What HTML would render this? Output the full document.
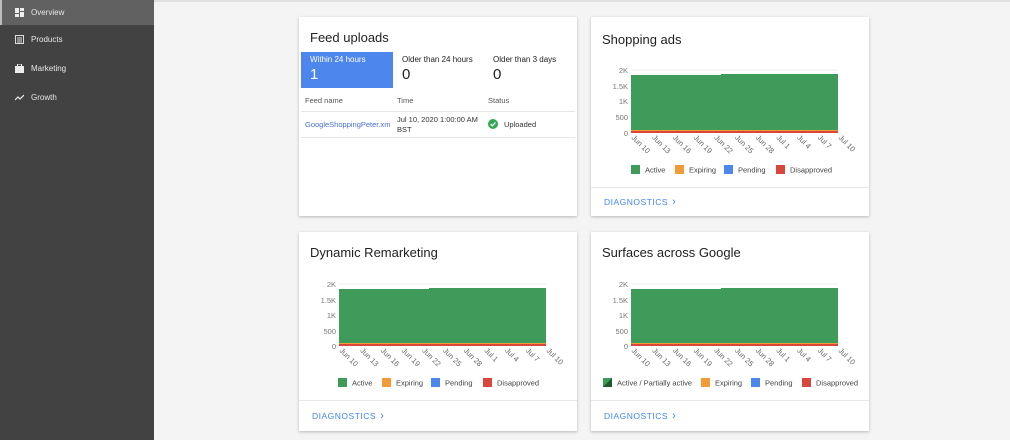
<!DOCTYPE html>
<html><head><style>
*{box-sizing:border-box;margin:0;padding:0}
body{width:1010px;height:440px;overflow:hidden;background:#f4f4f4;font-family:"Liberation Sans",sans-serif;position:relative}
.side{position:absolute;left:0;top:0;width:154px;height:440px;background:#424242}
.item{position:absolute;left:0;width:154px;height:25px;color:#e6e6e6;font-size:8px;line-height:25px;padding-left:31px}
.item.sel{background:#616161;border-left:2px solid #bdbdbd;padding-left:29px}
.ic{position:absolute;left:15px;top:8px;width:9px;height:9px}
.topline{position:absolute;left:154px;top:0;right:0;height:2px;background:#e0e0e0}
.card{position:absolute;background:#fff;width:278px;height:199px;box-shadow:0 1px 3px rgba(0,0,0,.25)}
.title{position:absolute;left:11px;top:14px;font-size:13px;color:#212121}
.div{position:absolute;left:0;right:0;height:1px;background:#e6e6e6}
.diag{position:absolute;left:13px;top:179px;font-size:8.5px;color:#4285f4;letter-spacing:.5px}
.diag b{font-weight:normal;font-size:11px;margin-left:4px}
svg text{font-family:"Liberation Sans",sans-serif}
</style></head><body>
<div class="side">
 <div class="item sel" style="top:0"><svg class="ic" style="left:13px" viewBox="0 0 9 9"><rect x="0" y="0" width="4" height="5" fill="#eee"/><rect x="5" y="0" width="4" height="3" fill="#eee"/><rect x="0" y="6" width="4" height="3" fill="#eee"/><rect x="5" y="4" width="4" height="5" fill="#eee"/></svg>Overview</div>
 <div class="item" style="top:27px"><svg class="ic" viewBox="0 0 9 9"><rect x=".5" y=".5" width="8" height="8" fill="none" stroke="#ddd"/><path d="M2 3h5M2 5h5M2 7h5" stroke="#ddd"/></svg>Products</div>
 <div class="item" style="top:56px"><svg class="ic" viewBox="0 0 9 9"><rect x="0" y="2" width="9" height="7" fill="#eee"/><rect x="2.5" y="0" width="4" height="3" fill="none" stroke="#eee"/></svg>Marketing</div>
 <div class="item" style="top:85px"><svg class="ic" viewBox="0 0 9 9"><path d="M0 7l3-3 2 2 4-4" stroke="#eee" fill="none" stroke-width="1.2"/></svg>Growth</div>
</div>
<div class="topline"></div>

<div class="card" style="left:299px;top:17px">
 <div class="title" style="top:13px">Feed uploads</div>
 <div style="position:absolute;left:2px;top:35px;width:92px;height:36px;background:#4d87ee;color:#fff;padding:3px 9px"><div style="font-size:8px">Within 24 hours</div><div style="font-size:15px;margin-top:2px">1</div></div>
 <div style="position:absolute;left:103px;top:38px;color:#212121"><div style="font-size:8px">Older than 24 hours</div><div style="font-size:15px;margin-top:2px">0</div></div>
 <div style="position:absolute;left:194px;top:38px;color:#212121"><div style="font-size:8px">Older than 3 days</div><div style="font-size:15px;margin-top:2px">0</div></div>
 <div style="position:absolute;top:79px;left:6px;font-size:7.5px;color:#555">Feed name</div>
 <div style="position:absolute;top:79px;left:98px;font-size:7.5px;color:#555">Time</div>
 <div style="position:absolute;top:79px;left:189px;font-size:7.5px;color:#555">Status</div>
 <div class="div" style="top:94px;left:2px;right:2px"></div>
 <div style="position:absolute;top:103px;left:6px;font-size:7.5px;color:#4a6fd6">GoogleShoppingPeter.xm</div>
 <div style="position:absolute;top:98px;left:98px;font-size:7.5px;color:#333;line-height:10px">Jul 10, 2020 1:00:00 AM<br>BST</div>
 <svg style="position:absolute;left:189px;top:102px" width="10" height="10" viewBox="0 0 10 10"><circle cx="5" cy="5" r="5" fill="#34a853"/><path d="M2.6 5.2l1.7 1.6 3.2-3.3" stroke="#fff" stroke-width="1.3" fill="none"/></svg>
 <div style="position:absolute;top:103px;left:205px;font-size:7.5px;color:#333">Uploaded</div>
 <div class="div" style="top:120px;left:2px;right:2px"></div>
</div>

<div class="card" style="left:591px;top:17px">
 <div class="title" style="top:15px">Shopping ads</div>
 <svg style="position:absolute;left:0;top:0" width="278" height="170">
  <g fill="#777" font-size="7.5" text-anchor="end"><text x="37" y="56">2K</text><text x="37" y="72">1.5K</text><text x="37" y="87">1K</text><text x="37" y="103">500</text><text x="37" y="119">0</text></g>
  <path d="M40 53H247M40 69H247M40 84H247M40 100H247" stroke="#e6e6e6" stroke-width=".7"/>
  <path d="M40 58L130 58L130 57L247 57L247 114L40 114Z" fill="#3f9b5a"/>
  <rect x="40" y="113" width="207" height="1" fill="#f29b38"/><rect x="40" y="114" width="207" height="2" fill="#d9473c"/>
  <g fill="#666" font-size="7.5"><text transform="translate(40,121) rotate(45)">Jun 10</text><text transform="translate(60.7,121) rotate(45)">Jun 13</text><text transform="translate(81.4,121) rotate(45)">Jun 16</text><text transform="translate(102.1,121) rotate(45)">Jun 19</text><text transform="translate(122.8,121) rotate(45)">Jun 22</text><text transform="translate(143.5,121) rotate(45)">Jun 25</text><text transform="translate(164.2,121) rotate(45)">Jun 28</text><text transform="translate(184.9,121) rotate(45)">Jul 1</text><text transform="translate(205.6,121) rotate(45)">Jul 4</text><text transform="translate(226.3,121) rotate(45)">Jul 7</text><text transform="translate(247,121) rotate(45)">Jul 10</text></g>
  <g font-size="7.5" fill="#444"><rect x="40" y="148" width="9" height="9" fill="#3f9b5a"/><text x="54" y="155.5">Active</text><rect x="84" y="148" width="9" height="9" fill="#f29b38"/><text x="98" y="155.5">Expiring</text><rect x="133" y="148" width="9" height="9" fill="#4d87ee"/><text x="147" y="155.5">Pending</text><rect x="185" y="148" width="9" height="9" fill="#d9473c"/><text x="199" y="155.5">Disapproved</text></g>
 </svg>
 <div class="div" style="top:170px"></div>
 <div class="diag">DIAGNOSTICS<b>›</b></div>
</div>

<div class="card" style="left:299px;top:232px">
 <div class="title" style="top:13px">Dynamic Remarketing</div>
 <svg style="position:absolute;left:0;top:0" width="278" height="170">
  <g fill="#777" font-size="7.5" text-anchor="end"><text x="37" y="55">2K</text><text x="37" y="71">1.5K</text><text x="37" y="86">1K</text><text x="37" y="102">500</text><text x="37" y="117">0</text></g>
  <path d="M40 52H247M40 68H247M40 83H247M40 99H247" stroke="#e6e6e6" stroke-width=".7"/>
  <path d="M40 57L130 57L130 56L247 56L247 112L40 112Z" fill="#3f9b5a"/>
  <rect x="40" y="111" width="207" height="1" fill="#f29b38"/><rect x="40" y="112" width="207" height="2" fill="#d9473c"/>
  <g fill="#666" font-size="7.5"><text transform="translate(40,119) rotate(45)">Jun 10</text><text transform="translate(60.7,119) rotate(45)">Jun 13</text><text transform="translate(81.4,119) rotate(45)">Jun 16</text><text transform="translate(102.1,119) rotate(45)">Jun 19</text><text transform="translate(122.8,119) rotate(45)">Jun 22</text><text transform="translate(143.5,119) rotate(45)">Jun 25</text><text transform="translate(164.2,119) rotate(45)">Jun 28</text><text transform="translate(184.9,119) rotate(45)">Jul 1</text><text transform="translate(205.6,119) rotate(45)">Jul 4</text><text transform="translate(226.3,119) rotate(45)">Jul 7</text><text transform="translate(247,119) rotate(45)">Jul 10</text></g>
  <g font-size="7.5" fill="#444"><rect x="39" y="146" width="9" height="9" fill="#3f9b5a"/><text x="53" y="153.5">Active</text><rect x="83" y="146" width="9" height="9" fill="#f29b38"/><text x="97" y="153.5">Expiring</text><rect x="132" y="146" width="9" height="9" fill="#4d87ee"/><text x="146" y="153.5">Pending</text><rect x="184" y="146" width="9" height="9" fill="#d9473c"/><text x="198" y="153.5">Disapproved</text></g>
 </svg>
 <div class="div" style="top:168px"></div>
 <div class="diag" style="top:178px">DIAGNOSTICS<b>›</b></div>
</div>

<div class="card" style="left:591px;top:232px">
 <div class="title" style="top:13px">Surfaces across Google</div>
 <svg style="position:absolute;left:0;top:0" width="278" height="170">
  <g fill="#777" font-size="7.5" text-anchor="end"><text x="37" y="55">2K</text><text x="37" y="71">1.5K</text><text x="37" y="86">1K</text><text x="37" y="102">500</text><text x="37" y="117">0</text></g>
  <path d="M40 52H247M40 68H247M40 83H247M40 99H247" stroke="#e6e6e6" stroke-width=".7"/>
  <path d="M40 57L130 57L130 56L247 56L247 112L40 112Z" fill="#3f9b5a"/>
  <rect x="40" y="111" width="207" height="1" fill="#f29b38"/><rect x="40" y="112" width="207" height="2" fill="#d9473c"/>
  <g fill="#666" font-size="7.5"><text transform="translate(40,119) rotate(45)">Jun 10</text><text transform="translate(60.7,119) rotate(45)">Jun 13</text><text transform="translate(81.4,119) rotate(45)">Jun 16</text><text transform="translate(102.1,119) rotate(45)">Jun 19</text><text transform="translate(122.8,119) rotate(45)">Jun 22</text><text transform="translate(143.5,119) rotate(45)">Jun 25</text><text transform="translate(164.2,119) rotate(45)">Jun 28</text><text transform="translate(184.9,119) rotate(45)">Jul 1</text><text transform="translate(205.6,119) rotate(45)">Jul 4</text><text transform="translate(226.3,119) rotate(45)">Jul 7</text><text transform="translate(247,119) rotate(45)">Jul 10</text></g>
  <g font-size="7.5" fill="#444"><rect x="12" y="146" width="9" height="9" fill="#3f9b5a"/><path d="M12 155L21 146V155Z" fill="#1e5a30"/><text x="26" y="153.5">Active / Partially active</text><rect x="110" y="146" width="9" height="9" fill="#f29b38"/><text x="124" y="153.5">Expiring</text><rect x="160" y="146" width="9" height="9" fill="#4d87ee"/><text x="174" y="153.5">Pending</text><rect x="211" y="146" width="9" height="9" fill="#d9473c"/><text x="225" y="153.5">Disapproved</text></g>
 </svg>
 <div class="div" style="top:168px"></div>
 <div class="diag" style="top:178px">DIAGNOSTICS<b>›</b></div>
</div>
</body></html>
